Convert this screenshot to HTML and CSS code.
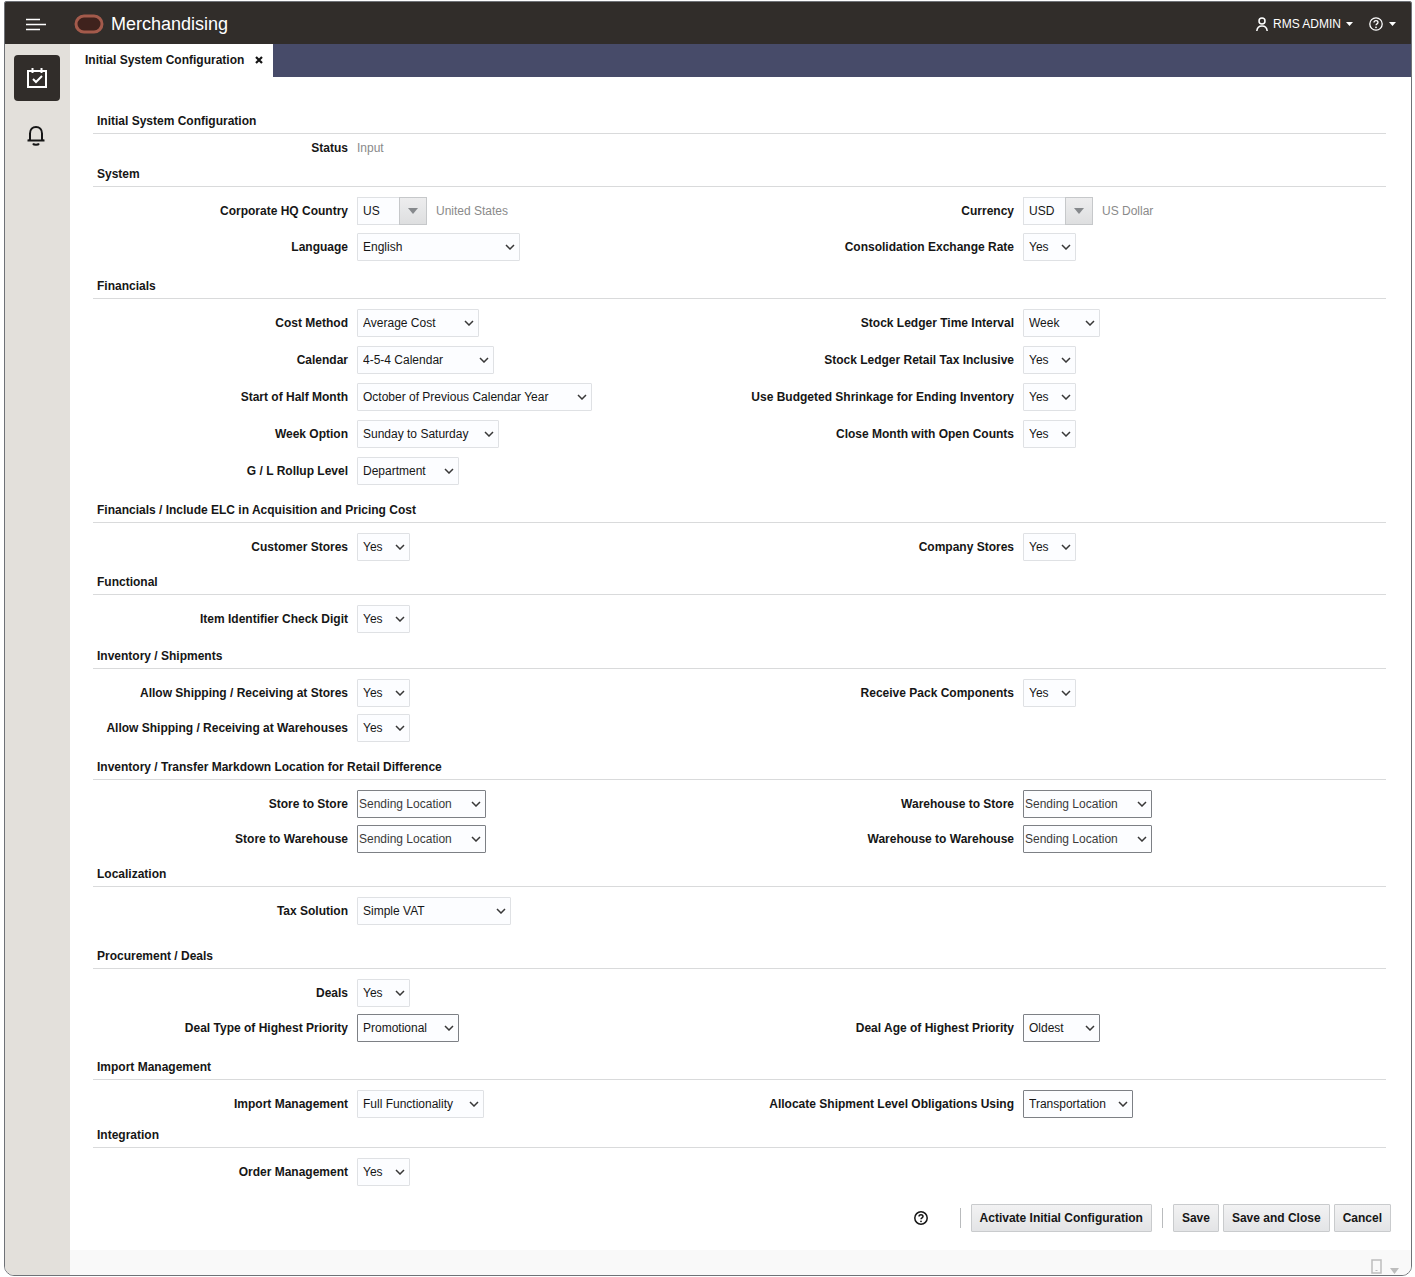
FILE: index.html
```html
<!DOCTYPE html>
<html lang="en">
<head>
<meta charset="utf-8">
<meta name="viewport" content="width=device-width, initial-scale=1">
<title>Merchandising - Initial System Configuration</title>
<link rel="stylesheet" href="styles.css">
</head>
<body>
<div class="window">
  <header class="topbar">
    <button class="icon-button menu" type="button" aria-label="Navigation menu">
      <svg width="21" height="14" viewBox="0 0 21 14"><path d="M1 2.500h14M1 7.500h20M1 12.500h14" fill="none" stroke="currentColor" stroke-width="1.500"/></svg>
    </button>
    <svg class="logo" width="30" height="20" viewBox="0 0 30 20" aria-hidden="true"><rect x="2" y="2" width="26" height="16" rx="8" fill="#3f221d" stroke="#a35a4b" stroke-width="3"/></svg>
    <h1 class="brand">Merchandising</h1>
    <button class="icon-button user" type="button">
      <svg width="12" height="14" viewBox="0 0 12 14"><g fill="none" stroke="currentColor" stroke-width="1.500"><circle cx="6" cy="4" r="3"/><path d="M.8 14c.3-3.300 2.300-5 5.200-5s4.900 1.700 5.200 5"/></g></svg>
      <span>RMS ADMIN</span>
      <svg width="7" height="4" viewBox="0 0 7 4"><path d="M0 0h7L3.500 4z" fill="currentColor"/></svg>
    </button>
    <button class="icon-button help" type="button" aria-label="Help">
      <svg width="14" height="14" viewBox="0 0 14 14"><g fill="none" stroke="currentColor" stroke-width="1.300"><circle cx="7" cy="7" r="6.200"/><path d="M5 5.600c0-2.600 4-2.500 4-.1 0 1.400-2 1.300-2 2.800"/></g><circle cx="7" cy="10.300" r=".9" fill="currentColor"/></svg>
      <svg width="7" height="4" viewBox="0 0 7 4"><path d="M0 0h7L3.500 4z" fill="currentColor"/></svg>
    </button>
  </header>

  <div class="workspace">
    <nav class="sidebar" aria-label="Tools">
      <button class="tool tool-active" type="button" aria-label="Tasks">
        <svg width="22" height="22" viewBox="0 0 22 22"><path d="M2 4h18v16H2zM6.500 1v5M15.500 1v5M7 12l3 3 6-6" fill="none" stroke="currentColor" stroke-width="2"/></svg>
      </button>
      <button class="tool" type="button" aria-label="Notifications">
        <svg width="22" height="22" viewBox="0 0 22 22"><path d="M1.500 15.500h17M4 15V8.500C4 4.500 6.500 2 10 2s6 2.500 6 6.500V15l2 .5M4 15l-2 .5M7 18.500c.8 1.700 5.200 1.700 6 0" fill="none" stroke="currentColor" stroke-width="2"/></svg>
      </button>
    </nav>

    <div class="main">
      <div class="tabbar">
        <div class="tab">
          <a href="#configuration">Initial System Configuration</a>
          <button class="tab-close" type="button" aria-label="Close tab"><svg width="8" height="8" viewBox="0 0 8 8"><path d="M1 1l6 6M7 1L1 7" stroke="currentColor" stroke-width="2.200"/></svg></button>
        </div>
      </div>

      <form class="config" id="configuration">
        <section class="group group-status">
          <h2>Initial System Configuration</h2>
          <div class="fields">
            <div class="field"><label for="status">Status</label><output class="note" id="status">Input</output></div>
          </div>
        </section>

        <section class="group space-14">
          <h2>System</h2>
          <div class="fields">
            <div class="field"><label for="country">Corporate HQ Country</label>
              <span class="combo"><input id="country" type="text" value="US"><button type="button" aria-label="Choose country"><svg width="10" height="6" viewBox="0 0 10 6"><path d="M0 0h10L5 6z" fill="currentColor"/></svg></button></span>
              <span class="note">United States</span></div>
            <div class="field"><label for="currency">Currency</label>
              <span class="combo"><input id="currency" type="text" value="USD"><button type="button" aria-label="Choose currency"><svg width="10" height="6" viewBox="0 0 10 6"><path d="M0 0h10L5 6z" fill="currentColor"/></svg></button></span>
              <span class="note">US Dollar</span></div>
            <div class="field"><label for="language">Language</label><select class="w-language" id="language"><option>English</option></select></div>
            <div class="field"><label for="rate">Consolidation Exchange Rate</label><select id="rate"><option>Yes</option></select></div>
          </div>
        </section>

        <section class="group space-14">
          <h2>Financials</h2>
          <div class="fields fields-loose">
            <div class="field"><label for="cost">Cost Method</label><select class="w-cost" id="cost"><option>Average Cost</option></select></div>
            <div class="field"><label for="interval">Stock Ledger Time Interval</label><select class="w-short" id="interval"><option>Week</option></select></div>
            <div class="field"><label for="calendar">Calendar</label><select class="w-calendar" id="calendar"><option>4-5-4 Calendar</option></select></div>
            <div class="field"><label for="tax-inclusive">Stock Ledger Retail Tax Inclusive</label><select id="tax-inclusive"><option>Yes</option></select></div>
            <div class="field"><label for="half">Start of Half Month</label><select class="w-half" id="half"><option>October of Previous Calendar Year</option></select></div>
            <div class="field"><label for="shrinkage">Use Budgeted Shrinkage for Ending Inventory</label><select id="shrinkage"><option>Yes</option></select></div>
            <div class="field"><label for="week">Week Option</label><select class="w-week" id="week"><option>Sunday to Saturday</option></select></div>
            <div class="field"><label for="open-counts">Close Month with Open Counts</label><select id="open-counts"><option>Yes</option></select></div>
            <div class="field"><label for="rollup">G / L Rollup Level</label><select class="w-medium" id="rollup"><option>Department</option></select></div>
          </div>
        </section>

        <section class="group space-10">
          <h2>Financials / Include ELC in Acquisition and Pricing Cost</h2>
          <div class="fields">
            <div class="field"><label for="customer-stores">Customer Stores</label><select id="customer-stores"><option>Yes</option></select></div>
            <div class="field"><label for="company-stores">Company Stores</label><select id="company-stores"><option>Yes</option></select></div>
          </div>
        </section>

        <section class="group">
          <h2>Functional</h2>
          <div class="fields">
            <div class="field"><label for="check-digit">Item Identifier Check Digit</label><select id="check-digit"><option>Yes</option></select></div>
          </div>
        </section>

        <section class="group space-14">
          <h2>Inventory / Shipments</h2>
          <div class="fields fields-tight">
            <div class="field"><label for="ship-stores">Allow Shipping / Receiving at Stores</label><select id="ship-stores"><option>Yes</option></select></div>
            <div class="field"><label for="pack">Receive Pack Components</label><select id="pack"><option>Yes</option></select></div>
            <div class="field"><label for="ship-warehouses">Allow Shipping / Receiving at Warehouses</label><select id="ship-warehouses"><option>Yes</option></select></div>
          </div>
        </section>

        <section class="group space-10">
          <h2>Inventory / Transfer Markdown Location for Retail Difference</h2>
          <div class="fields fields-tight">
            <div class="field"><label for="store-store">Store to Store</label><select class="outlined w-location" id="store-store"><option>Sending Location</option></select></div>
            <div class="field"><label for="warehouse-store">Warehouse to Store</label><select class="outlined w-location" id="warehouse-store"><option>Sending Location</option></select></div>
            <div class="field"><label for="store-warehouse">Store to Warehouse</label><select class="outlined w-location" id="store-warehouse"><option>Sending Location</option></select></div>
            <div class="field"><label for="warehouse-warehouse">Warehouse to Warehouse</label><select class="outlined w-location" id="warehouse-warehouse"><option>Sending Location</option></select></div>
          </div>
        </section>

        <section class="group space-20">
          <h2>Localization</h2>
          <div class="fields">
            <div class="field"><label for="tax">Tax Solution</label><select class="w-tax" id="tax"><option>Simple VAT</option></select></div>
          </div>
        </section>

        <section class="group space-14">
          <h2>Procurement / Deals</h2>
          <div class="fields fields-tight">
            <div class="field field-row"><label for="deals">Deals</label><select id="deals"><option>Yes</option></select></div>
            <div class="field"><label for="deal-type">Deal Type of Highest Priority</label><select class="outlined w-medium" id="deal-type"><option>Promotional</option></select></div>
            <div class="field"><label for="deal-age">Deal Age of Highest Priority</label><select class="outlined w-short" id="deal-age"><option>Oldest</option></select></div>
          </div>
        </section>

        <section class="group space-6">
          <h2>Import Management</h2>
          <div class="fields">
            <div class="field"><label for="import">Import Management</label><select class="w-import" id="import"><option>Full Functionality</option></select></div>
            <div class="field"><label for="allocate">Allocate Shipment Level Obligations Using</label><select class="outlined w-allocate" id="allocate"><option>Transportation</option></select></div>
          </div>
        </section>

        <section class="group space-18">
          <h2>Integration</h2>
          <div class="fields">
            <div class="field"><label for="order">Order Management</label><select id="order"><option>Yes</option></select></div>
          </div>
        </section>

        <div class="actions">
          <button class="icon-button page-help" type="button" aria-label="Page help">
            <svg width="14" height="14" viewBox="0 0 14 14"><g fill="none" stroke="currentColor" stroke-width="1.500"><circle cx="7" cy="7" r="6.200"/><path d="M5 5.600c0-2.600 4-2.500 4-.1 0 1.400-2 1.300-2 2.800"/></g><circle cx="7" cy="10.300" r=".9" fill="currentColor"/></svg>
          </button>
          <span class="divider"></span>
          <button class="action" type="button">Activate Initial Configuration</button>
          <span class="divider"></span>
          <div class="action-set">
            <button class="action" type="button">Save</button>
            <button class="action" type="button">Save and Close</button>
            <button class="action" type="button">Cancel</button>
          </div>
        </div>
      </form>

      <footer class="statusbar">
        <svg width="11" height="15" viewBox="0 0 11 15" aria-hidden="true"><path d="M1 1h9v13H1z" fill="none" stroke="currentColor" stroke-width="1.500"/><path d="M4.500 11.500h2" stroke="currentColor"/></svg>
        <svg width="9" height="6" viewBox="0 0 9 6" aria-hidden="true"><path d="M0 0h9L4.500 6z" fill="currentColor"/></svg>
      </footer>
    </div>
  </div>
</div>
</body>
</html>
```

FILE: styles.css
```css
* {
  box-sizing: border-box;
}

body {
  margin: 0;
  background: #fff;
  color: #161616;
  font: 12px/16px "Liberation Sans", Arial, sans-serif;
}

button,
input,
select {
  margin: 0;
  font: inherit;
  color: inherit;
}

svg {
  display: block;
}

.window {
  display: flex;
  flex-direction: column;
  min-height: calc(100vh - 3px);
  margin: 1px 3px 2px 4px;
  border: 1px solid #6f7277;
  border-radius: 2px 2px 10px 10px;
  overflow: hidden;
}

/* Top bar */

.topbar {
  display: flex;
  align-items: center;
  height: 42px;
  padding: 2px 15px 0 20px;
  background: #312d2a;
  color: #fff;
}

.icon-button {
  display: flex;
  align-items: center;
  padding: 0;
  border: 0;
  background: none;
}

.menu {
  margin-right: 28px;
}

.brand {
  margin: 0 auto 0 7px;
  font-size: 18px;
  line-height: 24px;
  font-weight: normal;
}

.user {
  gap: 5px;
  margin-right: 16px;
}

.help {
  gap: 6px;
}

/* Sidebar */

.workspace {
  display: flex;
  flex: 1;
}

.sidebar {
  display: flex;
  flex-direction: column;
  gap: 12px;
  width: 65px;
  padding: 11px 9px;
  background: #e3e0db;
}

.tool {
  display: flex;
  align-items: center;
  justify-content: center;
  width: 46px;
  height: 46px;
  padding: 0;
  border: 0;
  border-radius: 4px;
  background: none;
}

.tool-active {
  background: #312d2a;
  color: #fff;
}

/* Tabs */

.main {
  display: flex;
  flex: 1;
  flex-direction: column;
  min-width: 0;
}

.tabbar {
  display: flex;
  height: 33px;
  background: #474b69;
}

.tab {
  display: flex;
  align-items: center;
  gap: 11px;
  padding: 0 10px 2px 15px;
  background: #fff;
  font-weight: bold;
}

.tab a {
  color: inherit;
  text-decoration: none;
}

.tab-close {
  padding: 0;
  border: 0;
  background: none;
}

/* Form */

.config {
  padding: 33px 25px 18px 23px;
}

.group {
  margin-bottom: 12px;
}

.group h2 {
  margin: 0;
  padding-left: 4px;
  border-bottom: 1px solid #d9dadb;
  font-size: 12px;
  line-height: 23px;
}

.fields {
  display: grid;
  grid-template-columns: 666fr 636fr;
  row-gap: 8px;
  margin-left: -9px;
  padding-top: 10px;
}

.fields-loose {
  row-gap: 9px;
}

.fields-tight {
  row-gap: 7px;
}

.group-status {
  margin-bottom: 1px;
}

.group-status .fields {
  padding: 0;
}

.space-6 {
  margin-bottom: 6px;
}

.space-10 {
  margin-bottom: 10px;
}

.space-14 {
  margin-bottom: 14px;
}

.space-18 {
  margin-bottom: 18px;
}

.space-20 {
  margin-bottom: 20px;
}

.field {
  display: flex;
  align-items: center;
  gap: 9px;
  height: 28px;
}

.field-row {
  grid-column: 1 / -1;
}

.field label {
  width: 264px;
  font-weight: bold;
  text-align: right;
  white-space: nowrap;
}

.note {
  color: #8a8a8a;
}

select {
  width: 53px;
  height: 28px;
  padding: 0 20px 0 5px;
  border: 1px solid #dfe1e4;
  border-radius: 1px;
  appearance: none;
  background: #fcfdff url("data:image/svg+xml,%3Csvg xmlns='http://www.w3.org/2000/svg' width='10' height='6'%3E%3Cpath d='M1 1l4 4 4-4' fill='none' stroke='%23383838' stroke-width='1.500'/%3E%3C/svg%3E") no-repeat right 4px center;
}

.outlined {
  border-color: #7d8085;
}

.w-short {
  width: 77px;
}

.w-medium {
  width: 102px;
}

.w-allocate {
  width: 110px;
}

.w-cost {
  width: 122px;
}

.w-import {
  width: 127px;
}

.w-location {
  width: 129px;
  padding-left: 1px;
  color: #3a3a3a;
}

.w-calendar {
  width: 137px;
}

.w-week {
  width: 142px;
}

.w-tax {
  width: 154px;
}

.w-language {
  width: 163px;
}

.w-half {
  width: 235px;
}

.combo {
  display: flex;
  width: 70px;
  height: 28px;
}

.combo input {
  width: 42px;
  padding: 0 5px;
  border: 1px solid #dfe1e4;
  border-right: 0;
  background: #fcfdff;
}

.combo button {
  display: flex;
  align-items: center;
  justify-content: center;
  width: 28px;
  padding: 0;
  border: 1px solid #c6c8ca;
  background: linear-gradient(#ededee, #dedfe0);
  color: #86898c;
}

/* Actions */

.actions {
  display: flex;
  align-items: center;
  justify-content: flex-end;
  gap: 10px;
  margin-right: -5px;
}

.page-help {
  margin-right: 22px;
}

.divider {
  width: 1px;
  height: 20px;
  background: #b9bbbd;
}

.action-set {
  display: flex;
  gap: 4px;
}

.action {
  height: 28px;
  padding: 0 8px;
  border: 1px solid #c9cbcd;
  border-radius: 1px;
  background: linear-gradient(#f2f2f3, #e3e4e6);
  font-weight: bold;
}

.statusbar {
  display: flex;
  align-items: flex-end;
  justify-content: flex-end;
  gap: 8px;
  height: 25px;
  margin-top: auto;
  padding: 0 12px 1px;
  background: #f9f9f9;
  color: #bdbdbd;
}
```
